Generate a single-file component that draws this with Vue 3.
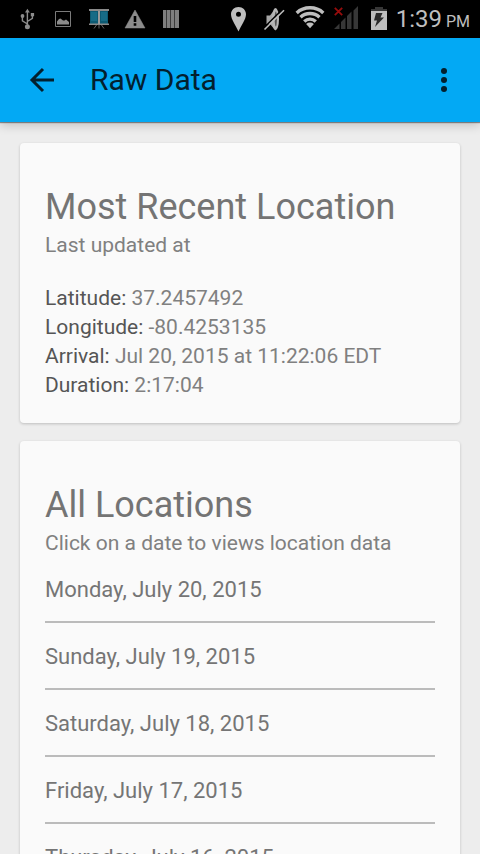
<script setup>
const details = [
  { label: 'Latitude:', value: '37.2457492' },
  { label: 'Longitude:', value: '-80.4253135' },
  { label: 'Arrival:', value: 'Jul 20, 2015 at 11:22:06 EDT' },
  { label: 'Duration:', value: '2:17:04' }
]

const dates = [
  'Monday, July 20, 2015',
  'Sunday, July 19, 2015',
  'Saturday, July 18, 2015',
  'Friday, July 17, 2015',
  'Thursday, July 16, 2015'
]
</script>

<template>
  <div class="screen">
    <div class="status">
      <div class="icons notices">
        <!-- usb -->
        <svg class="icon" viewBox="0 0 24 24" fill="none" stroke="#8c8c8c" stroke-width="1.4">
          <path d="M12.4 4v15M12.4 17l-5-3.2V10M12.4 14.5l5-3.2V8.500" />
          <path d="M12.400 1.800l2.400 3.700h-4.800z" fill="#8c8c8c" stroke="none" />
          <circle cx="12.4" cy="19.700" r="2.500" fill="#8c8c8c" stroke="none" />
          <circle cx="7.500" cy="9" r="1.900" fill="#8c8c8c" stroke="none" />
          <path d="M15.800 6h3.300v3.300h-3.300z" fill="#8c8c8c" stroke="none" />
        </svg>
        <!-- picture -->
        <svg class="icon" viewBox="0 0 24 24">
          <path d="M4.500 4.500h15v15h-15z" fill="none" stroke="#7b7b7b" />
          <path d="M6 17.500v-3l2-2.500 1.500-.5 2.500 2 1.500 0 1.500-1 3 2.500v2.500z" fill="#8c8c8c" />
        </svg>
        <!-- projector screen -->
        <svg class="icon" viewBox="0 0 24 24">
          <path d="M3 4h18v13H3z" fill="#0d5a73" />
          <path d="M4 5h6v9H4zM14 5h6v9h-6z" fill="#176b86" />
          <path d="M2 2h20v2H2zM2 16.500h20v1.500H2z" fill="#8a8a8a" />
          <path d="M11 4h2v13h-2z" fill="#9a9a9a" />
          <path d="M9.500 18L7 21.500M12 18v3.500M14.500 18l2.500 3.500" fill="none" stroke="#666" />
        </svg>
        <!-- warning -->
        <svg class="icon" viewBox="0 0 24 24">
          <path d="M12 3l10 18H2z" fill="#8c8c8c" stroke="#8c8c8c" stroke-width=".5" stroke-linejoin="round" />
          <path d="M10.700 9h2.600v6h-2.600zM10.700 16.300h2.600v2.400h-2.600z" fill="#000" />
        </svg>
        <!-- bars -->
        <svg class="icon" viewBox="0 0 24 24">
          <path d="M4 3h16v18H4z" fill="#7f7f7f" />
          <path d="M7.500 3v18M11.500 3v18M15.500 3v18" stroke="#3c3c3c" />
        </svg>
      </div>
      <div class="icons system">
        <!-- location pin -->
        <svg class="icon" viewBox="0 0 24 24">
          <path d="M12.500 0C8.200 0 5 3.200 5 7.300c0 5.200 5.200 12 7.500 17.200C14.800 19.300 20 12.500 20 7.300 20 3.200 16.800 0 12.500 0zm0 4.800a2.500 2.500 0 110 5 2.500 2.500 0 010-5z" fill="#bebebe" />
        </svg>
        <!-- muted speaker -->
        <svg class="icon" viewBox="0 0 24 24">
          <path d="M4.500 8.500h3.500l5-6.500v21l-5-6H4.500z" fill="#a6a6a6" />
          <ellipse cx="13.500" cy="12.200" rx="3.500" ry="11.200" fill="#b5b5b5" />
          <ellipse cx="13.800" cy="12" rx="1.100" ry="7.500" fill="#555" />
          <path d="M1.500 21.300L20.800 2" stroke="#000" stroke-width="1.600" />
          <path d="M2.500 22.500L22 3.300" stroke="#bebebe" stroke-width="1.600" />
        </svg>
        <!-- wifi -->
        <svg class="icon" viewBox="0 0 24 24" fill="none" stroke="#bebebe" stroke-width="3.400">
          <path d="M-1.300 5.900C6-.9 18-.9 25.300 5.900" />
          <path d="M2.500 10.200c5.300-4.900 13.700-4.900 19 0" />
          <path d="M6.200 14.400c3.300-3 8.300-3 11.600 0" />
          <path d="M12 21.300l-3.900-4.400c2.300-1.800 5.500-1.800 7.800 0z" fill="#bebebe" stroke="none" />
        </svg>
        <!-- no signal -->
        <svg class="icon" viewBox="0 0 24 24">
          <path d="M0 22l5.500-5.500V22zM7 22v-7l4.500-4.500V22zM13 22V9l4.500-4.500V22zM19.500 22V3.500L24 -1v23z" fill="#373737" />
          <path d="M.8.800l7.400 7.400M8.200.8L.8 8.200" stroke="#970c0c" stroke-width="1.800" />
        </svg>
        <!-- charging battery -->
        <svg class="icon" viewBox="0 0 24 24">
          <path d="M8 0h8v2h4v5H4V2h4z" fill="#373737" />
          <path d="M4 4h16v19H4z" fill="#bebebe" />
          <path d="M4 2h16v2H4z" fill="#373737" />
          <path d="M9 6h6.500l-2 4.500h3.500L8 20l2-6.500H7z" fill="#2a2a2a" />
        </svg>
      </div>
      <div class="clock">1:39<span class="meridiem"> PM</span></div>
    </div>

    <header class="bar">
      <button class="tool" type="button" aria-label="Back">
        <svg class="glyph" viewBox="0 0 36 36" fill="none" stroke="#03202e" stroke-width="3">
          <path d="M30 18H8M19 7L8 18l11 11" />
        </svg>
      </button>
      <h1 class="title">Raw Data</h1>
      <button class="tool" type="button" aria-label="More options">
        <svg class="glyph" viewBox="0 0 36 36" fill="#03202e">
          <circle cx="18" cy="9" r="3" />
          <circle cx="18" cy="18" r="3" />
          <circle cx="18" cy="27" r="3" />
        </svg>
      </button>
    </header>

    <main class="content">
      <section class="card">
        <h2 class="heading">Most Recent Location</h2>
        <p class="sub">Last updated at</p>
        <dl class="details">
          <div v-for="item in details" :key="item.label">
            <dt>{{ item.label }}</dt>{{ ' ' }}<dd>{{ item.value }}</dd>
          </div>
        </dl>
      </section>

      <section class="card">
        <h2 class="heading">All Locations</h2>
        <p class="sub">Click on a date to views location data</p>
        <ul class="dates">
          <li v-for="date in dates" :key="date">
            <button class="date" type="button">{{ date }}</button>
          </li>
        </ul>
      </section>
    </main>
  </div>
</template>

<style>
body {
  margin: 0;
  background: #ededed;
}
</style>

<style scoped>
.screen {
  display: flex;
  flex-direction: column;
  height: 100vh;
  background: #ededed;
  font-family: Roboto, sans-serif;
  font-size: 21px;
  line-height: 29px;
  color: #808080;
}

.status {
  display: flex;
  align-items: center;
  flex: none;
  height: 38px;
  padding: 0 10px 0 15px;
  background: #000;
}

.icons {
  display: flex;
}

.notices {
  gap: 12px;
}

.system {
  gap: 12px;
  margin-left: auto;
}

.system .icon:last-child {
  margin-left: -3px;
}

.icon {
  display: block;
  width: 24px;
  height: 24px;
  overflow: visible;
}

.clock {
  margin-left: 5px;
  padding-top: 2px;
  font-size: 24px;
  color: #bebebe;
  white-space: nowrap;
}

.meridiem {
  font-size: 16px;
}

.bar {
  position: relative;
  z-index: 1;
  display: flex;
  align-items: center;
  flex: none;
  height: 84px;
  padding: 0 12px 0 18px;
  background: #03a9f4;
  box-shadow: 0 1px 1px rgba(0, 0, 0, 0.4), 0 3px 10px rgba(0, 0, 0, 0.2);
}

.tool {
  display: grid;
  place-items: center;
  width: 48px;
  height: 48px;
  padding: 0;
  border: 0;
  background: none;
}

.glyph {
  width: 36px;
  height: 36px;
}

.title {
  flex: 1;
  margin: 0 0 0 24px;
  font-size: 30px;
  font-weight: 400;
  line-height: 36px;
  color: #03202e;
}

.content {
  display: flex;
  flex-direction: column;
  flex: 1;
  gap: 18px;
  min-height: 0;
  padding: 21px 20px;
  overflow-y: auto;
  scrollbar-width: none;
}

.card {
  flex: none;
  padding: 42px 25px 23px;
  border-radius: 4px;
  background: #fafafa;
  box-shadow: 0 1px 3px rgba(0, 0, 0, 0.2);
}

.heading {
  margin: 0;
  padding-bottom: 1px;
  font-size: 36px;
  font-weight: 400;
  line-height: 45px;
  color: #747474;
}

.sub {
  margin: 0;
}

.details {
  margin: 24px 0 0;
}

.details dt,
.details dd {
  display: inline;
  margin: 0;
}

.details dt {
  color: #555;
}

.dates {
  margin: 17px 0 0;
  padding: 0;
  list-style: none;
}

.dates li + li {
  padding-top: 19px;
}

.date {
  display: block;
  width: 100%;
  padding: 0 0 17px;
  border: 0;
  border-bottom: 2px solid #bbb;
  background: none;
  font: inherit;
  font-size: 22px;
  color: #757575;
  text-align: left;
}
</style>
